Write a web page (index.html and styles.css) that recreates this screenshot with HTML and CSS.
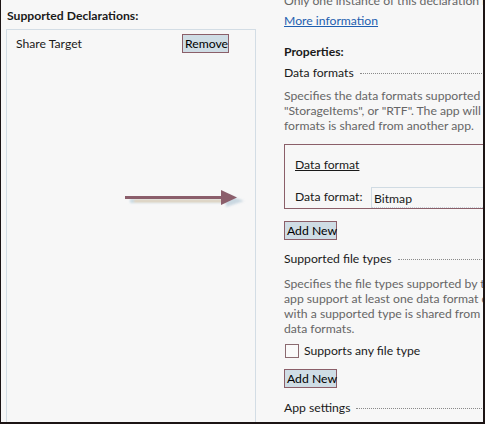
FILE: index.html
```html
<!DOCTYPE html>
<html>
<head>
<meta charset="utf-8">
<link rel="stylesheet" href="styles.css">
</head>
<body>
<div class="frame">
  <div class="left">
    <div class="left-title">Supported Declarations:</div>
    <div class="decl-list">
      <div class="decl-item"><span class="decl-name">Share Target</span><button class="btn btn-remove">Remove</button></div>
    </div>
  </div>
  <div class="right">
    <p class="cut">Only one instance of this declaration is allowed per app.</p>
    <a class="link" href="#">More information</a>
    <div class="section-title">Properties:</div>
    <div class="group-head">Data formats</div>
    <p class="desc">Specifies the data formats supported by the app; for example: "Text", "URI", "Bitmap", "HTML",<br>"StorageItems", or "RTF". The app will be displayed in the Share charm whenever one of the<br>formats is shared from another app.</p>
    <div class="groupbox">
      <div class="gb-title">Data format</div>
      <div class="field"><span class="field-label">Data format:</span><div class="input">Bitmap</div></div>
    </div>
    <button class="btn btn-add">Add New</button>
    <div class="group-head head-files">Supported file types</div>
    <p class="desc desc-files">Specifies the file types supported by the app; for example, ".jpg". Specifying file types requires that the<br>app support at least one data format or supports any file type. The app will be displayed<br>with a supported type is shared from another app, even if the app does not support the<br>data formats.</p>
    <div class="check"><span class="box"></span><span>Supports any file type</span></div>
    <button class="btn btn-add btn-add2">Add New</button>
    <div class="group-head head-app">App settings</div>
  </div>
  <svg class="arrow" width="130" height="30" viewBox="0 0 130 30">
    <defs>
      <filter id="blur" x="-10%" y="-100%" width="120%" height="300%">
        <feGaussianBlur stdDeviation="1.2"/>
      </filter>
    </defs>
    <g filter="url(#blur)" opacity="0.85">
      <rect x="10" y="14" width="108" height="4" fill="#c3d6df"/>
      <rect x="14" y="15" width="100" height="2" fill="#e3c9a0"/>
      <polygon points="106,9 124,16 106,22" fill="#c3d3de"/>
    </g>
    <rect x="5" y="11" width="98" height="3" fill="#8b5e6b"/>
    <polygon points="101,5 117,12.5 101,20" fill="#8b5e6b"/>
  </svg>
</div>
</body>
</html>
```
FILE: styles.css
```css
* { box-sizing: border-box; }
html, body { margin: 0; padding: 0; background: #f7f7f7; }
.frame {
  position: relative;
  width: 485px;
  height: 424px;
  border-left: 1px solid #1c1414;
  border-right: 2px solid #1c1414;
  border-bottom: 2px solid #1c1414;
  background: #f7f7f7;
  overflow: hidden;
  display: flex;
  font-family: Lato, "Open Sans", sans-serif;
  font-size: 12.2px;
  line-height: 15px;
  color: #1a1a1a;
}
.left {
  width: 283px;
  flex-shrink: 0;
  padding-top: 8px;
}
.left-title {
  font-weight: bold;
  padding-left: 6px;
}
.decl-list {
  margin: 6px 0 0 5px;
  width: 250px;
  height: 420px;
  border: 1px solid #d3dde5;
  padding: 4px 0 0 9px;
}
.decl-item {
  display: flex;
  align-items: center;
  justify-content: space-between;
  width: 213px;
}
.btn {
  font-family: inherit;
  font-size: 12.2px;
  line-height: 17px;
  height: 19px;
  color: #000;
  background: #cfdde5;
  border: 1px solid #8b5f69;
  padding: 0 2px;
  margin: 0;
  border-radius: 0;
  white-space: nowrap;
}
.btn-remove { width: 47px; }
.right {
  width: 520px;
  flex-shrink: 0;
  display: flex;
  flex-direction: column;
  align-items: flex-start;
}
.cut {
  margin: -7px 0 0;
  color: #666;
  white-space: nowrap;
}
.link {
  margin-top: 5px;
  color: #1f5fb0;
  text-decoration: underline;
}
.section-title {
  margin-top: 16px;
  font-weight: bold;
}
.group-head {
  margin-top: 6px;
  display: flex;
  align-items: center;
  width: 100%;
  white-space: nowrap;
}
.group-head::after {
  content: "";
  flex: 1;
  margin-left: 6px;
  margin-top: 1px;
  border-top: 1px dotted #8a8a8a;
}
.desc {
  margin: 8px 0 0;
  color: #666;
  white-space: nowrap;
}
.groupbox {
  margin-top: 11px;
  width: 100%;
  height: 65px;
  border: 1px solid #8b5f69;
  padding: 12px 0 0 10px;
}
.gb-title {
  text-decoration: underline;
  display: inline-block;
}
.field {
  display: flex;
  align-items: flex-start;
  margin-top: 15px;
}
.field-label {
  width: 76px;
  padding-top: 2px;
}
.input {
  flex: 1;
  height: 21px;
  border-top: 1px solid #d0dbe3;
  border-left: 1px solid #d0dbe3;
  border-bottom: 1px dotted #c8d2da;
  padding: 3px 0 0 2px;
  background: #f7f7f7;
}
.btn-add {
  margin-top: 12px;
  width: 53px;
}
.head-files { margin-top: 11px; }
.desc-files { margin-top: 10px; }
.check {
  margin-top: 7px;
  display: flex;
  align-items: center;
  height: 15px;
}
.box {
  width: 14px;
  height: 14px;
  margin-left: 1px;
  margin-right: 5px;
  border: 1px solid #8b6a70;
  background: #fafafa;
}
.btn-add2 { margin-top: 11px; }
.head-app { margin-top: 12px; }
.arrow {
  position: absolute;
  left: 119px;
  top: 185px;
}
```
